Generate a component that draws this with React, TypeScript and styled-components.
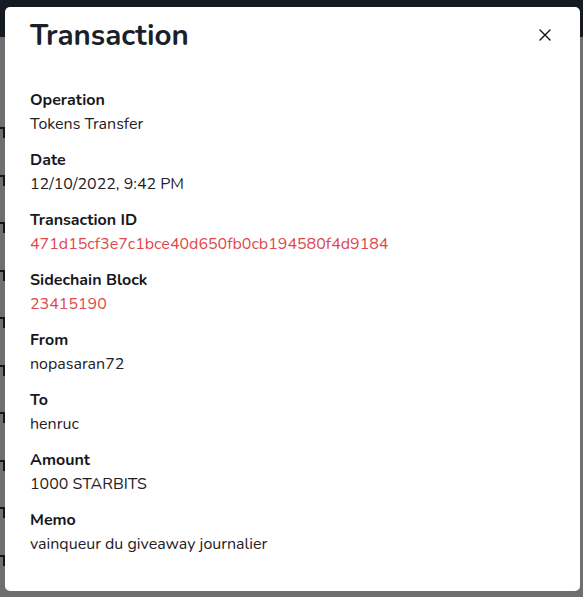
import React from "react";
import styled, { createGlobalStyle } from "styled-components";

const GlobalStyle = createGlobalStyle`
    html, body {
        margin: 0;
        padding: 0;
        height: 100%;
        overflow: hidden;
    }
    body {
        font-family: "Nunito", Lato, "Open Sans", sans-serif;
        background: #6e6f71;
    }
`;

const Page = styled.div`
    min-height: 100vh;
    display: flex;
    flex-direction: column;
`;

const NavBar = styled.div`
    height: 37px;
    background: #161b22;
`;

const Rows = styled.div`
    display: flex;
    flex-direction: column;
    padding-top: 90px;
`;

const RowMark = styled.div`
    height: 47.5px;
    &::before {
        content: "";
        display: block;
        width: 3px;
        height: 9px;
        border-top: 2px solid #151515;
        border-right: 2px solid #151515;
    }
`;

const Overlay = styled.div`
    position: fixed;
    inset: 0;
    padding: 7px 3px 6px 5px;
    display: flex;
`;

const Modal = styled.div`
    flex: 1;
    background: #ffffff;
    border-radius: 5px;
    display: flex;
    flex-direction: column;
    padding: 0 25px;
    color: #1b1d21;
`;

const Header = styled.div`
    display: flex;
    align-items: center;
    justify-content: space-between;
    height: 56px;
`;

const Title = styled.h2`
    margin: 0;
    font-size: 29.5px;
    font-weight: 700;
    color: #1b1f2a;
`;

const CloseButton = styled.button`
    border: none;
    background: transparent;
    padding: 0;
    margin-right: 3px;
    width: 14px;
    height: 14px;
    display: flex;
    align-items: center;
    justify-content: center;
    cursor: pointer;
    color: #111;
`;

const Body = styled.div`
    display: flex;
    flex-direction: column;
    gap: 12px;
    padding-top: 25px;
`;

const Field = styled.div`
    display: flex;
    flex-direction: column;
`;

const Label = styled.div`
    font-size: 16px;
    font-weight: 700;
    line-height: 24px;
    color: #16181c;
`;

const Value = styled.div<{ $link?: boolean }>`
    font-size: 16px;
    line-height: 24px;
    color: ${(p) => (p.$link ? "#e0484b" : "#1f2125")};
`;

const fields: { label: string; value: string; link?: boolean }[] = [
    { label: "Operation", value: "Tokens Transfer" },
    { label: "Date", value: "12/10/2022, 9:42 PM" },
    { label: "Transaction ID", value: "471d15cf3e7c1bce40d650fb0cb194580f4d9184", link: true },
    { label: "Sidechain Block", value: "23415190", link: true },
    { label: "From", value: "nopasaran72" },
    { label: "To", value: "henruc" },
    { label: "Amount", value: "1000 STARBITS" },
    { label: "Memo", value: "vainqueur du giveaway journalier" },
];

export default function App() {
    return (
        <>
            <GlobalStyle />
            <Page>
                <NavBar />
                <Rows>
                    {Array.from({ length: 10 }).map((_, i) => (
                        <RowMark key={i} />
                    ))}
                </Rows>
            </Page>
            <Overlay>
                <Modal>
                    <Header>
                        <Title>Transaction</Title>
                        <CloseButton aria-label="Close">
                            <svg width="12" height="12" viewBox="0 0 12 12" fill="none" stroke="currentColor" strokeWidth="1.4" strokeLinecap="round">
                                <path d="M1 1L11 11M11 1L1 11" />
                            </svg>
                        </CloseButton>
                    </Header>
                    <Body>
                        {fields.map((f) => (
                            <Field key={f.label}>
                                <Label>{f.label}</Label>
                                <Value $link={f.link}>{f.value}</Value>
                            </Field>
                        ))}
                    </Body>
                </Modal>
            </Overlay>
        </>
    );
}
